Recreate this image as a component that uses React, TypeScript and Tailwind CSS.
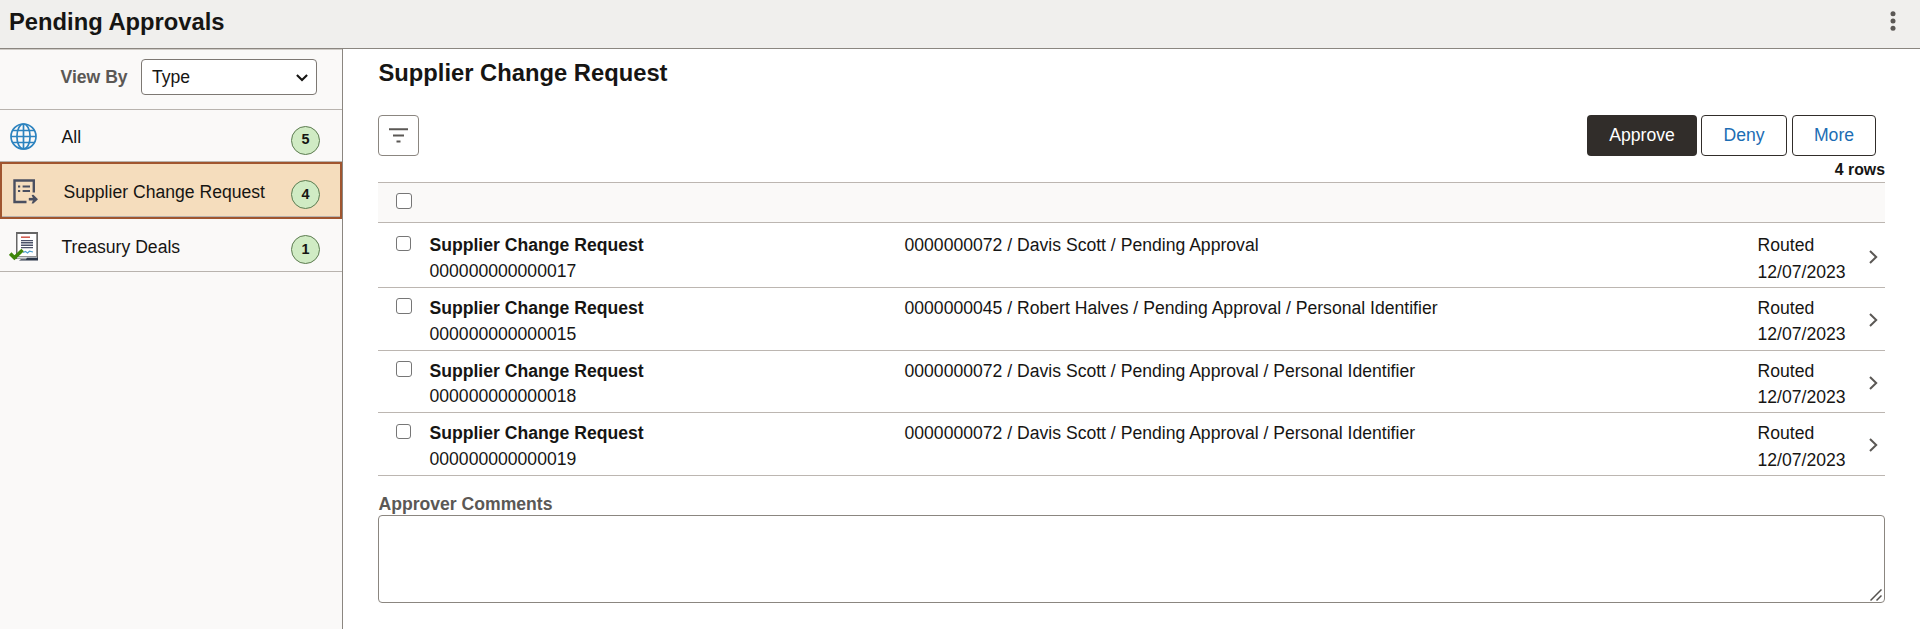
import React from 'react'

interface Category {
  label: string
  count: number
  icon: React.ReactNode
  item: string
  iconBox: string
  badge: string
}

interface RequestRow {
  id: string
  detail: string
  date: string
  height: string
  checkbox: string
  title: string
  dateLine: string
}

function GlobeIcon() {
  return (
    <svg width="27" height="27" viewBox="0 0 27 27" fill="none" stroke="#2c83bf" strokeWidth="1.7">
      <circle cx="13.5" cy="13.5" r="12.5" />
      <ellipse cx="13.5" cy="13.5" rx="6.6" ry="12.5" />
      <path d="M13.5 1v25M1 13.5h25M3 7.5h21M3 19.5h21" />
    </svg>
  )
}

function RequestIcon() {
  return (
    <svg width="25" height="25" viewBox="0 0 25 25" fill="none" stroke="#4a4f60" strokeWidth="2.4">
      <path d="M20.8 13.5V1.5H1.5V23H13.5" />
      <path d="M5 7.6h2.2M5 12h2.2M9.6 7.6H17M9.6 12H17" strokeWidth="2" />
      <path d="M15.8 20.2H22" strokeWidth="2.6" />
      <path d="M18.6 16L20.4 15.8L25 20.2L20.4 24.6L18.6 24.4L20.4 20.2Z" fill="#4a4f60" stroke="none" />
    </svg>
  )
}

function TreasuryIcon() {
  return (
    <svg width="30" height="29" viewBox="0 0 30 29" fill="none">
      <path d="M7 0h22v27H7z" fill="#666" />
      <path d="M8.5 2h18.8v22H8.5z" fill="#fff" />
      <path d="M12 5.2h9" stroke="#cf5548" strokeWidth="1.5" />
      <path d="M12 8.6h12M12 10.8h12M12 13.2h12M12 15.6h12" stroke="#4b5268" strokeWidth="1.4" />
      <path d="M14 20.5l2.5-1 2 1.5 2-1.8 3.5.8" stroke="#4d9fce" strokeWidth="1.2" />
      <path d="M8 25.6h20" stroke="#d5dade" strokeWidth="2" />
      <path d="M12 27.2h5l1-1.4h11V28.4H10z" fill="#2b3749" />
      <path d="M1.2 21.6l4.2 4.2L13.6 18" stroke="#3e8609" strokeWidth="3.6" />
    </svg>
  )
}

function Checkbox({ className = '' }: { className?: string }) {
  return (
    <input
      type="checkbox"
      className={`block shrink-0 appearance-none rounded-[3px] border border-[#767676] bg-white ${className}`}
    />
  )
}

const categories: Category[] = [
  {
    label: 'All',
    count: 5,
    icon: <GlobeIcon />,
    item: 'h-[52px] border-b border-[#b8b3ae] pl-2.5 pr-[22px]',
    iconBox: 'mt-px w-[51.5px]',
    badge: 'mt-[9px]',
  },
  {
    label: 'Supplier Change Request',
    count: 4,
    icon: <RequestIcon />,
    item: 'h-[57px] border-2 border-[#a0552f] bg-[#f5ddbd] pl-[11px] pr-5 shadow-[inset_0_-1px_#b8b3ae]',
    iconBox: 'mt-0.5 w-[50.5px]',
    badge: 'mt-2',
  },
  {
    label: 'Treasury Deals',
    count: 1,
    icon: <TreasuryIcon />,
    item: 'h-[53px] border-b border-[#b8b3ae] pl-[9px] pr-[22px]',
    iconBox: 'mt-[3px] w-[52.5px]',
    badge: 'mt-[9px]',
  },
]

const rows: RequestRow[] = [
  {
    id: '000000000000017',
    detail: '0000000072 / Davis Scott / Pending Approval',
    date: '12/07/2023',
    height: 'h-[65px] pt-3',
    checkbox: 'mt-px size-[15px]',
    title: 'h-[26px]',
    dateLine: 'mt-px',
  },
  {
    id: '000000000000015',
    detail: '0000000045 / Robert Halves / Pending Approval / Personal Identifier',
    date: '12/07/2023',
    height: 'h-[63px] pt-2.5',
    checkbox: 'size-4',
    title: 'h-[26px]',
    dateLine: '',
  },
  {
    id: '000000000000018',
    detail: '0000000072 / Davis Scott / Pending Approval / Personal Identifier',
    date: '12/07/2023',
    height: 'h-[62px] pt-2.5',
    checkbox: 'size-4',
    title: 'h-[25px]',
    dateLine: 'mt-px',
  },
  {
    id: '000000000000019',
    detail: '0000000072 / Davis Scott / Pending Approval / Personal Identifier',
    date: '12/07/2023',
    height: 'h-[63px] pt-2.5',
    checkbox: 'mt-px size-[15px]',
    title: 'h-[26px]',
    dateLine: 'mt-px',
  },
]

function Sidebar() {
  return (
    <aside className="w-[343px] shrink-0 border-r border-[#8b8680] bg-[#faf9f8]">
      <div className="flex h-[61px] items-start border-t border-b border-t-[#cfcbc6] border-b-[#b8b3ae] pt-[9px]">
        <label className="ml-[60.5px] w-[80.5px] leading-9 font-bold text-[#5b5855]">View By</label>
        <div className="flex h-9 w-44 items-center justify-between rounded-[4px] border border-[#7d7873] bg-white pr-2 pl-2.5">
          <span>Type</span>
          <svg className="mt-0.5" width="12" height="8" viewBox="0 0 12 8" fill="none" stroke="#161513" strokeWidth="2.1">
            <path d="M.9 1L6 6.1L11.1 1" />
          </svg>
        </div>
      </div>
      {categories.map((category) => (
        <div key={category.label} className={`flex items-center ${category.item}`}>
          <span className={category.iconBox}>{category.icon}</span>
          <span className="mt-1 grow">{category.label}</span>
          <span
            className={`flex size-[29px] items-center justify-center rounded-full border border-[#5c7b50] bg-[#d0ebc4] text-[14.4px] font-bold ${category.badge}`}
          >
            {category.count}
          </span>
        </div>
      ))}
    </aside>
  )
}

function Toolbar() {
  return (
    <div className="flex h-[41px] items-stretch">
      <button className="flex w-[41px] items-center justify-center rounded-[4px] border border-[#8b8680]">
        <svg width="19" height="15" viewBox="0 0 19 15" fill="none" stroke="#5b5855" strokeWidth="2">
          <path d="M0 1.3h19M4 7.5h11M7.5 13.5h4" />
        </svg>
      </button>
      <div className="mr-[9px] ml-auto flex">
        <button className="mr-1 w-[110px] rounded-[4px] bg-[#312d2a] text-white">Approve</button>
        <button className="mr-[5px] w-[86px] rounded-[4px] border border-[#312d2a] text-[#1c6db4]">Deny</button>
        <button className="w-[84px] rounded-[4px] border border-[#312d2a] text-[#1c6db4]">More</button>
      </div>
    </div>
  )
}

function Row({ row }: { row: RequestRow }) {
  return (
    <div className={`flex items-start border-b border-[#bcb6b1] leading-5 ${row.height}`}>
      <div className="w-[51.5px] pl-[18px]">
        <Checkbox className={row.checkbox} />
      </div>
      <div className="w-[475px]">
        <div className={`font-bold ${row.title}`}>Supplier Change Request</div>
        <div>{row.id}</div>
      </div>
      <div className="grow">{row.detail}</div>
      <div className="w-[111px]">
        <div className={row.title}>Routed</div>
        <div className={row.dateLine}>{row.date}</div>
      </div>
      <svg className="mt-[15px] mr-[7.5px]" width="9" height="14" viewBox="0 0 9 14" fill="none" stroke="#5b5855" strokeWidth="2">
        <path d="M1 1L7.2 7L1 13" />
      </svg>
    </div>
  )
}

export default function App() {
  return (
    <div className="flex h-[629px] w-[1920px] flex-col overflow-hidden bg-white font-['Liberation_Sans',Arial,sans-serif] text-[17.6px] text-[#161513]">
      <header className="flex h-[49px] shrink-0 items-start justify-between border-b border-[#8b8680] bg-[#f0efed] pl-[9px]">
        <h1 className="pt-2 text-[23.76px] leading-7 font-bold">Pending Approvals</h1>
        <svg className="mt-[11px] mr-6" width="6" height="20" viewBox="0 0 6 20" fill="#5b5855">
          <circle cx="3" cy="2.8" r="2.5" />
          <circle cx="3" cy="10" r="2.5" />
          <circle cx="3" cy="17.2" r="2.5" />
        </svg>
      </header>

      <div className="flex grow">
        <Sidebar />
        <main className="flex grow flex-col pt-2.5 pr-[35px] pl-[35px]">
          <h2 className="mb-7 pl-[0.5px] text-[23.76px] leading-7 font-bold">Supplier Change Request</h2>
          <Toolbar />
          <div className="h-[26px] pt-1 text-right text-[15.84px] leading-[19px] font-bold">4 rows</div>
          <div className="h-[41px] border-y border-[#bcb6b1] bg-[#faf9f8] pt-2.5 pl-[18px]">
            <Checkbox className="size-4" />
          </div>
          {rows.map((row) => (
            <Row key={row.id} row={row} />
          ))}
          <label className="mt-[18px] h-[21px] pl-[0.5px] leading-[21px] font-bold text-[#5b5855]">Approver Comments</label>
          <div className="relative h-[88px]">
            <textarea className="block h-full w-full resize-none rounded-[4px] border border-[#8b8680] bg-white" />
            {/* Resize grip */}
            <svg className="absolute right-[3px] bottom-[2px]" width="12" height="12" viewBox="0 0 12 12" fill="none" stroke="#55524f" strokeWidth="1.5">
              <path d="M.5 11.5L11.5.5M6.5 11.5L11.5 6.5" />
            </svg>
          </div>
        </main>
      </div>
    </div>
  )
}
